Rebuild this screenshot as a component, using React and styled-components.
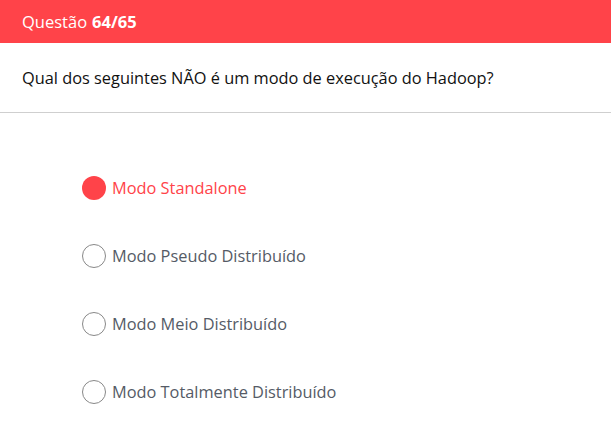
import React, { useState } from "react";
import styled, { createGlobalStyle } from "styled-components";

const Global = createGlobalStyle`
  html, body { margin: 0; padding: 0; background: #fff; }
  body { font-family: "Open Sans", "Noto Sans", sans-serif; }
`;

const Page = styled.div`
  width: 611px;
  height: 438px;
  display: flex;
  flex-direction: column;
  background: #fff;
`;

const Header = styled.div`
  height: 43px;
  background: #ff4349;
  color: #fff;
  display: flex;
  align-items: center;
  padding: 0 22px;
  font-size: 16.5px;
  box-sizing: border-box;
`;

const Strong = styled.b`
  font-weight: 700;
  margin-left: 5px;
`;

const Question = styled.div`
  height: 69px;
  display: flex;
  align-items: center;
  padding: 0 22px;
  font-size: 16.35px;
  color: #111;
  border-bottom: 1px solid #cfcfcf;
  box-sizing: content-box;
`;

const Options = styled.div`
  display: flex;
  flex-direction: column;
  gap: 44px;
  padding: 63px 0 0 82px;
`;

const Option = styled.label`
  display: flex;
  align-items: center;
  gap: 6px;
  height: 24px;
  font-size: 16.35px;
  color: ${(p) => (p.$selected ? "#ff4349" : "#555b66")};
  cursor: pointer;
`;

const Radio = styled.span`
  width: 24px;
  height: 24px;
  border-radius: 50%;
  box-sizing: border-box;
  background: ${(p) => (p.$selected ? "#ff4349" : "#fff")};
  border: ${(p) => (p.$selected ? "none" : "1px solid #888")};
  flex: none;
`;

const options = [
  "Modo Standalone",
  "Modo Pseudo Distribuído",
  "Modo Meio Distribuído",
  "Modo Totalmente Distribuído",
];

export default function App() {
  const [sel, setSel] = useState(0);
  return (
    <Page>
      <Global />
      <Header>
        Questão<Strong>64/65</Strong>
      </Header>
      <Question>Qual dos seguintes NÃO é um modo de execução do Hadoop?</Question>
      <Options>
        {options.map((o, i) => (
          <Option key={o} $selected={sel === i} onClick={() => setSel(i)}>
            <Radio $selected={sel === i} />
            {o}
          </Option>
        ))}
      </Options>
    </Page>
  );
}
